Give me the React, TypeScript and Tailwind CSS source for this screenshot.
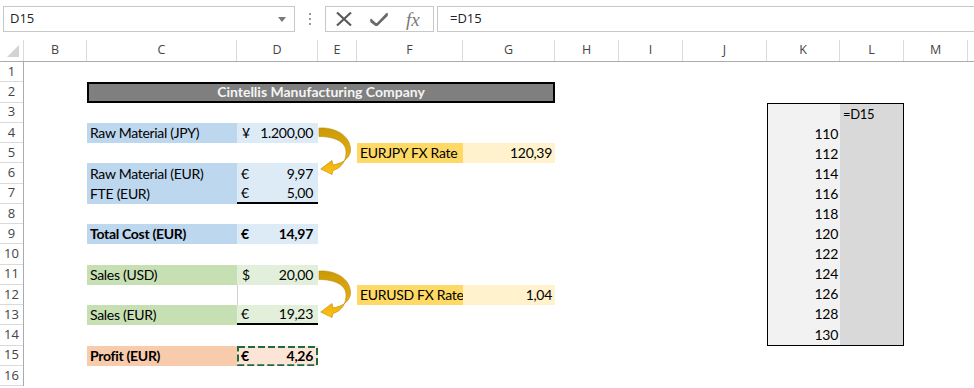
import React from "react";

const colHeads = [
  { l: "B", w: "w-[63px]" },
  { l: "C", w: "w-[150px]" },
  { l: "D", w: "w-[81px]" },
  { l: "E", w: "w-[39px]" },
  { l: "F", w: "w-[106px]" },
  { l: "G", w: "w-[92px]" },
  { l: "H", w: "w-[64px]" },
  { l: "I", w: "w-[64px]" },
  { l: "J", w: "w-[84px]" },
  { l: "K", w: "w-[73px]" },
  { l: "L", w: "w-[64px]" },
  { l: "M", w: "w-[64px]" },
];

const rows = Array.from({ length: 16 }, (_, i) => i + 1);
const kValues = ["", "110", "112", "114", "116", "118", "120", "122", "124", "126", "128", "130"];

// accounting style: symbol left, number right
const Acc = ({ sym, val }: { sym: string; val: string }) => (
  <div className="flex w-full justify-between pl-[4px] pr-[5px]">
    <span>{sym}</span>
    <span>{val}</span>
  </div>
);

const CurvedArrow = ({ className }: { className: string }) => (
  <svg className={className} width="38" height="56" viewBox="0 0 38 56">
    <defs>
      <linearGradient id="gold" x1="0" y1="0" x2="0" y2="1">
        <stop offset="0" stopColor="#c99a06" />
        <stop offset="0.6" stopColor="#e6ab10" />
        <stop offset="1" stopColor="#ffc20e" />
      </linearGradient>
    </defs>
    <path
      d="M1 4 C18 3 32 12 32.5 25 C33 33 26 39 15 41 L14 36.5 L2.7 45 L14 50.5 L15 46.5 C24 44 28.5 36 28 27 C27.5 18 17 12.5 1 12.5 Z"
      fill="url(#gold)"
      stroke="#b8860b"
      strokeWidth="0.6"
    />
  </svg>
);

export default function App() {
  return (
    <div className="relative h-[388px] w-[974px] overflow-hidden bg-white font-['Open_Sans',sans-serif] text-[#222]">
      {/* Formula bar */}
      <div className="flex h-[40px] items-start pt-[6px]">
        <div className="ml-[3px] flex h-[26px] w-[292px] items-center justify-between border border-[#c8c8c8] pl-[6px] pr-[8px] text-[13px]">
          <span>D15</span>
          <span className="h-0 w-0 border-x-[4px] border-t-[5px] border-x-transparent border-t-[#7a7a7a]" />
        </div>
        <div className="ml-[13px] mt-[7px] flex w-[3px] flex-col items-center gap-[3px]">
          <span className="h-[2px] w-[2px] bg-[#9a9a9a]" />
          <span className="h-[2px] w-[2px] bg-[#9a9a9a]" />
          <span className="h-[2px] w-[2px] bg-[#9a9a9a]" />
        </div>
        <div className="ml-[14px] flex h-[26px] w-[109px] items-center border border-[#c8c8c8]">
          <svg className="ml-[9px]" width="18" height="16" viewBox="0 0 18 16">
            <path d="M2 1.5 L16 14.5 M16 1.5 L2 14.5" stroke="#5a5a5a" strokeWidth="2.2" fill="none" />
          </svg>
          <svg className="ml-[17px]" width="18" height="14" viewBox="0 0 18 14">
            <path d="M1 7.5 L6.5 12.5 L17 1.5 L17 3.5 L6.5 13.8 L1 9.5 Z" fill="#6a6a6a" stroke="#6a6a6a" strokeWidth="1.6" strokeLinejoin="round" />
          </svg>
          <span className="ml-[18px] font-['Liberation_Serif',serif] text-[19px] italic leading-none text-[#7a7a7a]">fx</span>
        </div>
        <div className="ml-[3px] mr-[-2px] flex h-[26px] flex-1 items-center border border-[#c8c8c8] pl-[12px] text-[13px]">
          =D15
        </div>
      </div>

      {/* Column headers */}
      <div className="flex h-[22px] border-b border-[#ababab] text-[12.5px] text-[#444]">
        <div className="relative w-[24px] border-r border-[#dadada]">
          <span className="absolute bottom-[4px] right-[4px] h-0 w-0 border-b-[12px] border-l-[12px] border-b-[#d4d4d4] border-l-transparent" />
        </div>
        {colHeads.map((c) => (
          <div key={c.l} className={`${c.w} flex items-center justify-center border-r border-[#dadada]`}>
            {c.l}
          </div>
        ))}
        <div className="flex-1" />
      </div>

      <div className="flex">
        {/* Row headers */}
        <div className="flex w-[24px] flex-col border-r border-[#ababab] text-[13px] text-[#444]">
          {rows.map((r) => (
            <div key={r} className="flex h-[20.25px] items-center justify-center border-b border-[#dadada]">
              {r}
            </div>
          ))}
        </div>

        {/* Cells */}
        <div className="relative grid flex-1 grid-cols-[63px_150px_81px_39px_106px_92px_64px_64px_84px_73px_64px_64px_1fr] grid-rows-[repeat(16,20.25px)] whitespace-nowrap font-['Lato',sans-serif] text-[14px] leading-[18px] tracking-[-0.3px] text-black">
          <div className="col-start-2 col-end-7 row-start-2 flex items-center justify-center border-2 border-black bg-[#7f7f7f] font-bold tracking-[0px] text-[#f4f4f4]">
            Cintellis Manufacturing Company
          </div>

          <div className="col-start-2 row-start-4 flex items-end bg-[#bdd7ee] pb-[1px] pl-[3px]">Raw Material (JPY)</div>
          <div className="col-start-3 row-start-4 flex items-end bg-[#ddebf7] pb-[1px] pl-[1px]">
            <Acc sym="¥" val="1.200,00" />
          </div>

          <div className="col-start-5 row-start-5 flex items-end bg-[#ffd966] pb-[1px] pl-[3px]">EURJPY FX Rate</div>
          <div className="col-start-6 row-start-5 flex items-end justify-end bg-[#fff2cc] pb-[1px] pr-[3px]">120,39</div>

          <div className="col-start-2 row-start-6 flex items-end bg-[#bdd7ee] pb-[1px] pl-[3px]">Raw Material (EUR)</div>
          <div className="col-start-3 row-start-6 flex items-end bg-[#ddebf7] pb-[1px]">
            <Acc sym="€" val="9,97" />
          </div>
          <div className="col-start-2 row-start-7 flex items-end bg-[#bdd7ee] pb-[1px] pl-[3px]">FTE (EUR)</div>
          <div className="col-start-3 row-start-7 flex items-end border-b-2 border-black bg-[#ddebf7]">
            <Acc sym="€" val="5,00" />
          </div>

          <div className="col-start-2 row-start-9 flex items-end bg-[#bdd7ee] pb-[1px] pl-[3px] font-bold">Total Cost (EUR)</div>
          <div className="col-start-3 row-start-9 flex items-end bg-[#ddebf7] pb-[1px] font-bold">
            <Acc sym="€" val="14,97" />
          </div>

          <div className="col-start-2 row-start-11 flex items-end bg-[#c6e0b4] pb-[1px] pl-[3px]">Sales (USD)</div>
          <div className="col-start-3 row-start-11 flex items-end bg-[#e2efda] pb-[1px] pl-[1px]">
            <Acc sym="$" val="20,00" />
          </div>
          <div className="col-start-3 row-start-12 border-l border-[#d0d0d0]" />

          <div className="col-start-5 row-start-12 flex items-end bg-[#ffd966] pb-[1px] pl-[3px]">EURUSD FX Rate</div>
          <div className="col-start-6 row-start-12 flex items-end justify-end bg-[#fff2cc] pb-[1px] pr-[3px]">1,04</div>

          <div className="col-start-2 row-start-13 flex items-end bg-[#c6e0b4] pb-[1px] pl-[3px]">Sales (EUR)</div>
          <div className="col-start-3 row-start-13 flex items-end border-b-2 border-black bg-[#e2efda]">
            <Acc sym="€" val="19,23" />
          </div>

          <div className="col-start-2 row-start-15 flex items-end bg-[#f8cbad] pb-[1px] pl-[3px] font-bold">Profit (EUR)</div>
          <div className="relative col-start-3 row-start-15 flex items-end bg-[#fce4d6] pb-[1px] font-bold">
            <Acc sym="€" val="4,26" />
            <svg className="absolute inset-0 h-full w-full" preserveAspectRatio="none">
              <rect x="1" y="1" width="calc(100% - 2px)" height="calc(100% - 2px)" fill="none" stroke="#1f6b40" strokeWidth="2" strokeDasharray="7 3" />
            </svg>
          </div>

          {/* data table K3:L14 */}
          <div className="col-start-10 col-end-12 row-start-3 row-end-15 grid grid-cols-[72px_1fr] grid-rows-12 border border-black">
            {kValues.map((v, i) => (
              <React.Fragment key={i}>
                <div className="flex items-end justify-end bg-[#f2f2f2] pb-[1px] pr-[2px]">{v}</div>
                <div className="flex items-end bg-[#d9d9d9] pb-[1px] pl-[3px] text-[13px]">{i === 0 ? "=D15" : ""}</div>
              </React.Fragment>
            ))}
          </div>

          <CurvedArrow className="absolute left-[294px] top-[62px]" />
          <CurvedArrow className="absolute left-[294px] top-[205px]" />
        </div>
      </div>
    </div>
  );
}
